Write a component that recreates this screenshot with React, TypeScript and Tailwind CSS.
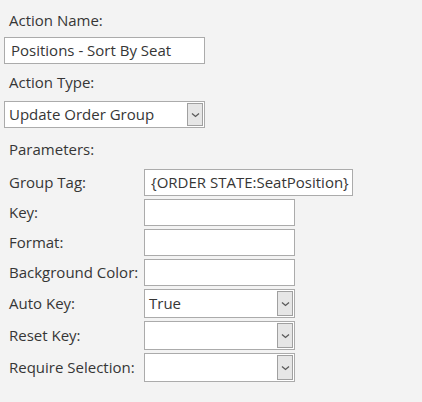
import React from 'react';

function Chevron() {
  return (
    <svg width="9" height="6" viewBox="0 0 9 6" className="block">
      <path d="M1 1.5 L4.5 4.5 L8 1.5" fill="none" stroke="#5a5a5a" strokeWidth="1.3" />
    </svg>
  );
}

function TextBox({ value = '', className = '' }: { value?: string; className?: string }) {
  return (
    <div className={`flex h-[27px] items-center border border-[#ababab] bg-white pl-[6px] ${className}`}>
      <span className="whitespace-nowrap">{value}</span>
    </div>
  );
}

function Select({ value = '', className = '' }: { value?: string; className?: string }) {
  return (
    <div className={`flex items-center border border-[#ababab] bg-white pl-[4px] pr-[1px] py-[1px] ${className}`}>
      <span className="flex-1 whitespace-nowrap">{value}</span>
      <div className="flex h-full w-[16px] items-center justify-center border border-[#a0a0a0] bg-[#e6e6e6]">
        <Chevron />
      </div>
    </div>
  );
}

const rows: { label: string; kind: 'text' | 'select'; value?: string; wide?: boolean }[] = [
  { label: 'Group Tag:', kind: 'text', value: '{ORDER STATE:SeatPosition}', wide: true },
  { label: 'Key:', kind: 'text' },
  { label: 'Format:', kind: 'text' },
  { label: 'Background Color:', kind: 'text' },
  { label: 'Auto Key:', kind: 'select', value: 'True' },
  { label: 'Reset Key:', kind: 'select' },
  { label: 'Require Selection:', kind: 'select' },
];

export default function App() {
  return (
    <div
      className="h-[402px] w-[422px] bg-[#f3f3f3] text-[15px] leading-none text-[#363636]"
      style={{ fontFamily: '"Open Sans", "Noto Sans", sans-serif' }}
    >
      <div className="flex flex-col pl-[4px] pt-[13px]">
        <div className="pl-[5px]">Action Name:</div>
        <TextBox value="Positions - Sort By Seat" className="mt-[9px] w-[201px]" />
        <div className="mt-[11px] pl-[5px]">Action Type:</div>
        <Select value="Update Order Group" className="mt-[11px] h-[27px] w-[201px]" />
        <div className="mt-[14px] pl-[5px]">Parameters:</div>

        <div className="mt-[12px] flex flex-col gap-[3px]">
          {rows.map((r) => (
            <div key={r.label} className="flex items-center">
              <div className="w-[140px] pl-[5px]">{r.label}</div>
              {r.kind === 'text' ? (
                <TextBox value={r.value} className={r.wide ? 'w-[209px]' : 'w-[151px]'} />
              ) : (
                <Select value={r.value} className="h-[29px] w-[151px]" />
              )}
            </div>
          ))}
        </div>
      </div>
    </div>
  );
}
